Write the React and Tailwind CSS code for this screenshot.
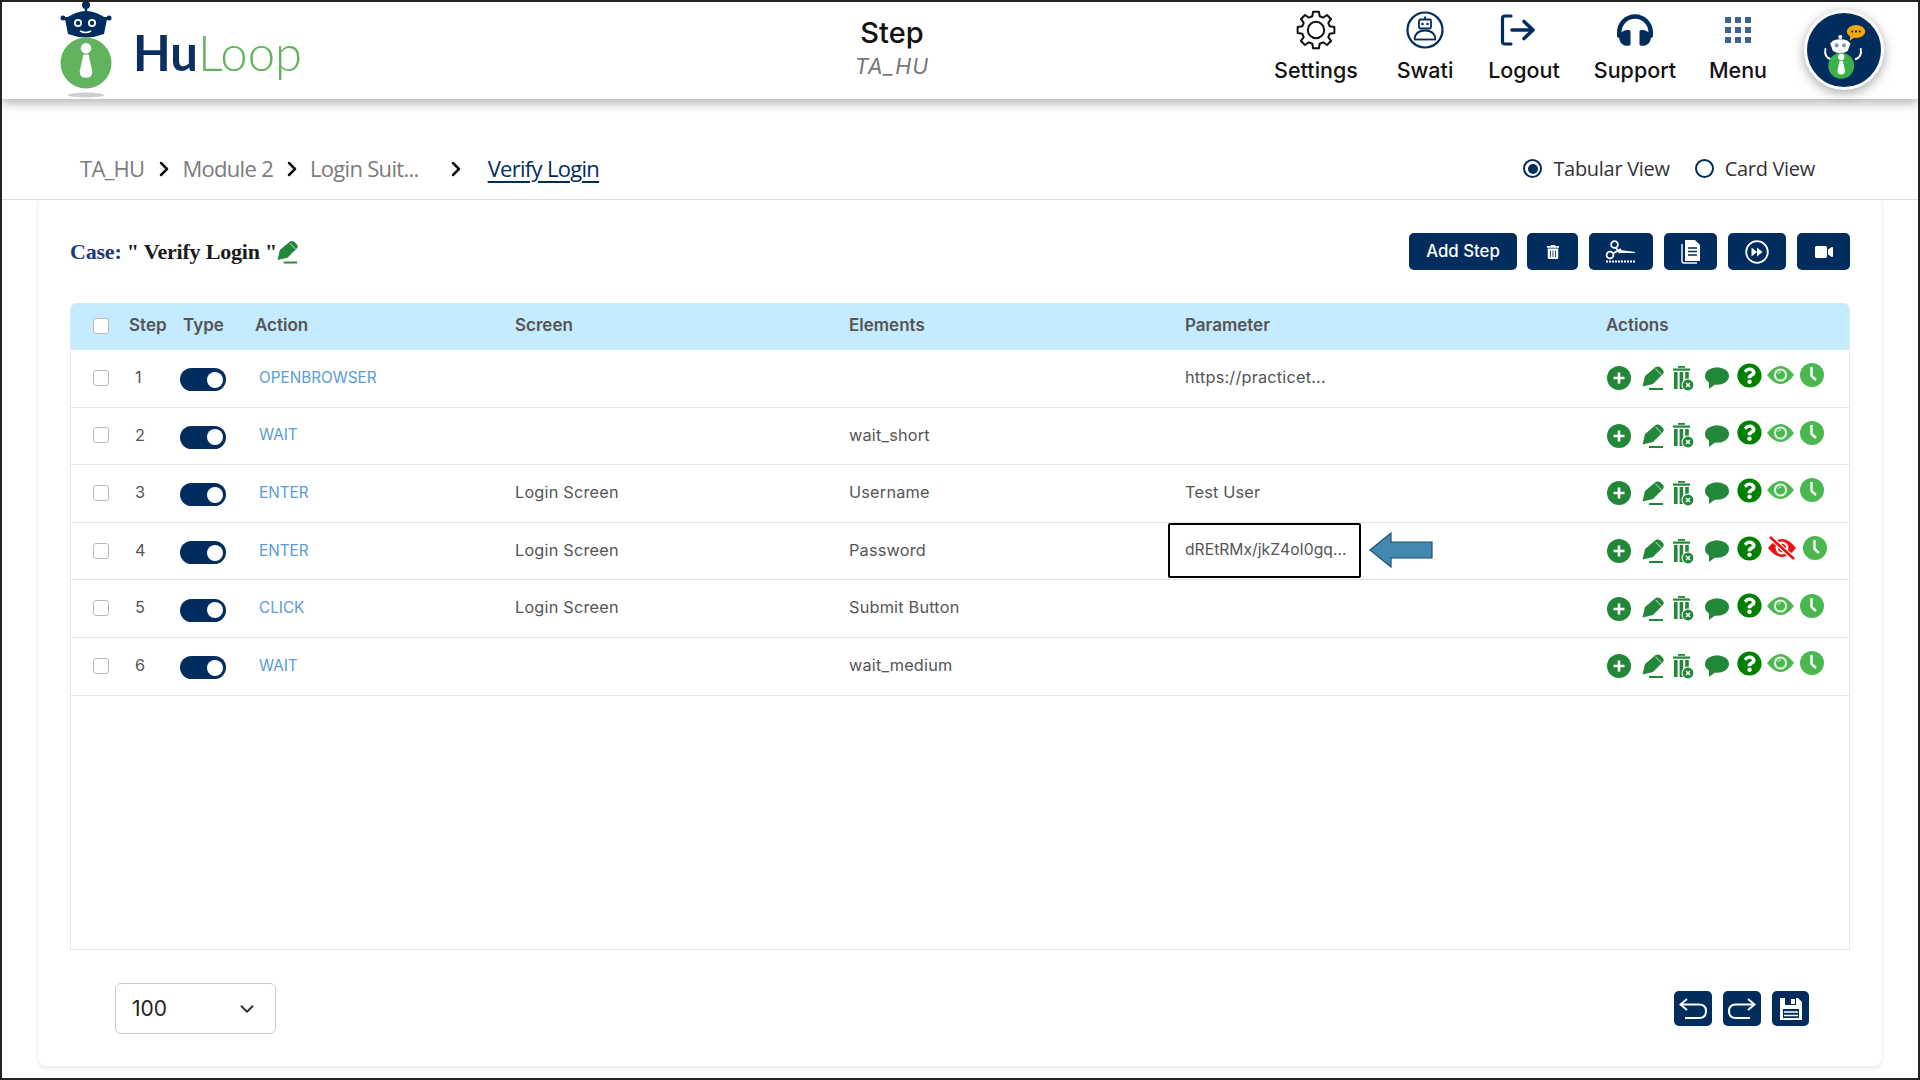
import React from "react";
import { ChevronRight, ChevronDown } from "lucide-react";
import { FaHeadphones, FaQuestionCircle, FaTrashAlt, FaVideo } from "react-icons/fa";

const G = "#23873a";
const L = "#4ab84f";
const NAVY = "#012d5e";

function RobotHead({ cx, cy, s = 1, fill = NAVY, eye = "#fff" }) {
  return (
    <g transform={`translate(${cx} ${cy}) scale(${s})`}>
      <circle cx="0" cy="-29" r="4" fill={fill} />
      <rect x="-1.2" y="-27" width="2.4" height="6" fill={fill} />
      <path d="M-18 0 L-21 -15 Q-10 -23 0 -23 Q10 -23 21 -15 L18 0 Q0 7 -18 0Z" fill={fill} />
      <circle cx="-23" cy="-16" r="2.5" fill={fill} />
      <circle cx="23" cy="-16" r="2.5" fill={fill} />
      <rect x="-23" y="-17" width="8" height="2" fill={fill} />
      <rect x="15" y="-17" width="8" height="2" fill={fill} />
      <circle cx="-8" cy="-11" r="4" fill={eye} />
      <circle cx="6" cy="-11" r="4" fill={eye} />
      <circle cx="-8" cy="-11" r="2.2" fill={fill} />
      <circle cx="6" cy="-11" r="2.2" fill={fill} />
      <path d="M-6 -3 Q0 0 5 -3" stroke={eye} strokeWidth="1.6" fill="none" />
    </g>
  );
}

function Tie({ cx, cy, s = 1, fill = "#fff" }) {
  return (
    <g transform={`translate(${cx} ${cy}) scale(${s})`}>
      <circle cx="0" cy="-14" r="5" fill={fill} />
      <path d="M-2.5 -8 L2.5 -8 L6 8 Q6 14 0 14 Q-6 14 -6 8Z" fill={fill} />
    </g>
  );
}

function LogoMark() {
  return (
    <svg width="52" height="98" viewBox="0 0 52 98" className="shrink-0">
      <RobotHead cx={26} cy={32} />
      <ellipse cx="26" cy="61" rx="25.5" ry="25.5" fill="#62b35d" />
      <Tie cx={26} cy={61} s={1.05} />
      <ellipse cx="26" cy="93" rx="18" ry="2.5" fill="#cfcfcf" />
    </svg>
  );
}

function gearPath() {
  const pts = [];
  for (let i = 0; i < 8; i++) {
    const a = i * 45;
    [[14.2, -15], [18.6, -9], [18.6, 9], [14.2, 15]].forEach(([r, d]) => {
      const t = ((a + d) * Math.PI) / 180;
      pts.push(`${(20 + r * Math.sin(t)).toFixed(2)} ${(20 - r * Math.cos(t)).toFixed(2)}`);
    });
  }
  return `M${pts.join(" L")}Z`;
}

function GearIcon() {
  return (
    <svg width="40" height="40" viewBox="0 0 40 40" fill="none" stroke="#111" strokeWidth="2" strokeLinejoin="round">
      <path d={gearPath()} />
      <circle cx="20" cy="20" r="8.2" />
    </svg>
  );
}

function SwatiIcon() {
  return (
    <svg width="38" height="38" viewBox="0 0 38 38" fill="none" stroke={NAVY}>
      <circle cx="19" cy="19" r="17.5" strokeWidth="2.2" />
      <rect x="13" y="8.5" width="12" height="9" rx="1.5" strokeWidth="1.8" />
      <circle cx="16.5" cy="13" r="1.3" fill={NAVY} stroke="none" />
      <circle cx="21.5" cy="13" r="1.3" fill={NAVY} stroke="none" />
      <path d="M19 8.5 V5.5" strokeWidth="1.8" />
      <path d="M8.5 28 Q9.5 19.5 19 19.5 Q28.5 19.5 29.5 28" strokeWidth="1.8" />
      <path d="M8 28.5 H30" strokeWidth="1.8" />
    </svg>
  );
}

function LogoutIcon() {
  return (
    <svg width="38" height="38" viewBox="0 0 38 38" fill="none" stroke={NAVY} strokeLinecap="round" strokeLinejoin="round" className="ml-[-12px]">
      <path d="M12 5 H6 Q3.5 5 3.5 7.5 V30.5 Q3.5 33 6 33 H12" strokeWidth="3.2" />
      <path d="M13 19 H33" strokeWidth="3.6" />
      <path d="M25 10.5 L34 19 L25 27.5" strokeWidth="3.6" />
    </svg>
  );
}

function GridIcon() {
  const cells = [0, 1, 2, 3, 4, 5, 6, 7, 8];
  return (
    <div className="grid grid-cols-3 gap-[4px] w-[26px]">
      {cells.map((c) => (
        <div key={c} className="w-[6px] h-[6px] bg-[#3b6493]" />
      ))}
    </div>
  );
}

function NavItem({ icon, label, w }) {
  return (
    <div className={`flex flex-col items-center ${w}`}>
      <div className="h-[36px] flex items-center justify-center">{icon}</div>
      <div className="mt-[7px] text-[21.5px] leading-[30px] font-medium text-[#111]">{label}</div>
    </div>
  );
}

function Avatar() {
  return (
    <div className="ml-[30px] mt-[-2px] w-[80px] h-[80px] rounded-full border-[3px] border-white bg-[#012d5e] shadow-[0_3px_12px_rgba(0,0,0,0.35)] shrink-0 overflow-hidden">
      <svg width="74" height="74" viewBox="0 0 80 80">
        <g transform="translate(0 2)">
          <path d="M20 36 Q18 46 26 48" stroke="#fff" strokeWidth="2" fill="none" />
          <path d="M58 36 Q60 46 52 48" stroke="#fff" strokeWidth="2" fill="none" />
          <circle cx="36" cy="24" r="2.2" fill="#fff" />
          <path d="M25 31 L28 28 Q36 25 44 28 L47 31 L44 39 Q36 44 28 39Z" fill="#fff" />
          <circle cx="32" cy="33" r="2.2" fill="#7f9bb8" />
          <circle cx="40" cy="33" r="2.2" fill="#7f9bb8" />
          <circle cx="37" cy="55" r="14" fill="#3cb14a" />
          <Tie cx={37} cy={55} s={0.68} />
          <ellipse cx="53" cy="18" rx="10" ry="7" fill="#f0a80f" />
          <path d="M47 22 L46 28 L52 24Z" fill="#f0a80f" />
          <circle cx="49" cy="18" r="1.2" fill={NAVY} />
          <circle cx="53" cy="18" r="1.2" fill={NAVY} />
          <circle cx="57" cy="18" r="1.2" fill={NAVY} />
        </g>
      </svg>
    </div>
  );
}

function Pencil({ w = 22, h = 24, color = G }) {
  return (
    <svg width={w} height={h} viewBox="0 0 22 24">
      <path d="M0.5 20.5 L3 10 L13 1.5 Q15.5 -0.5 18.5 1.5 L20.5 3.5 Q23 6 20.5 8.5 L11 18Z" fill={color} />
      <path d="M13.5 2.8 L19.4 9" stroke="#fff" strokeWidth="0.8" />
      <rect x="7" y="22" width="14" height="2" fill={color} />
    </svg>
  );
}

function TrashX() {
  return (
    <svg width="21" height="25" viewBox="0 0 21 25" className="shrink-0">
      <rect x="5" y="0" width="7" height="1.8" fill={G} />
      <rect x="0" y="2.5" width="17" height="2.2" fill={G} />
      <rect x="1" y="6" width="3.6" height="17" fill={G} />
      <rect x="6.6" y="6" width="3.6" height="17" fill={G} />
      <rect x="12.2" y="6" width="3.6" height="17" fill={G} />
      <circle cx="15" cy="19" r="6.5" fill="#fff" />
      <circle cx="15" cy="19" r="5.4" fill={G} />
      <path d="M13 17 L17 21 M17 17 L13 21" stroke="#fff" strokeWidth="1.5" />
    </svg>
  );
}

function Bubble() {
  return (
    <svg width="24" height="24" viewBox="0 0 24 24" className="shrink-0">
      <ellipse cx="12" cy="10" rx="12" ry="8.8" fill={G} />
      <path d="M4 14 L4 23 L12 17Z" fill={G} />
    </svg>
  );
}

function Eye() {
  return (
    <svg width="27" height="18" viewBox="0 0 27 18" className="shrink-0 mb-[6px]">
      <path d="M0 9 Q13.5 -9 27 9 Q13.5 27 0 9Z" fill={L} />
      <circle cx="13.5" cy="9" r="6.6" fill="#e4f5e4" />
      <circle cx="13.5" cy="9" r="4.6" fill={L} />
      <path d="M10.5 8 Q11.5 6 14 5.8" stroke="#e4f5e4" strokeWidth="1" fill="none" />
    </svg>
  );
}

function EyeOff() {
  return (
    <svg width="30" height="24" viewBox="0 0 30 24" className="shrink-0 mb-[6px]">
      <path d="M1 12 Q15 -6 29 12 Q15 30 1 12Z" fill="#f01010" />
      <circle cx="15" cy="12" r="6.4" fill="#fff" />
      <circle cx="15" cy="12" r="4.2" fill="#f01010" />
      <path d="M3 1 L27 23" stroke="#fff" strokeWidth="5" />
      <path d="M3 1 L27 23" stroke="#f01010" strokeWidth="2.6" />
    </svg>
  );
}

function Clock() {
  return (
    <svg width="24" height="24" viewBox="0 0 24 24" className="shrink-0 mb-[6px]">
      <circle cx="12" cy="12" r="12" fill={L} />
      <path d="M11.5 4 V13 L16 17" stroke="#fff" strokeWidth="2.4" fill="none" />
    </svg>
  );
}

function PlusCircle() {
  return (
    <svg width="24" height="24" viewBox="0 0 24 24" className="shrink-0">
      <circle cx="12" cy="12" r="12" fill={G} />
      <path d="M12 6.5 V17.5 M6.5 12 H17.5" stroke="#fff" strokeWidth="2.6" />
    </svg>
  );
}

function ActionIcons({ off }) {
  return (
    <div className="flex items-center h-full ml-[1px]">
      <PlusCircle />
      <div className="ml-[11px] shrink-0 flex"><Pencil /></div>
      <div className="ml-[9px] shrink-0 flex"><TrashX /></div>
      <div className="ml-[11px] shrink-0 flex"><Bubble /></div>
      <div className="ml-[8px] shrink-0 flex mb-[6px]"><FaQuestionCircle size={25} color="#008000" /></div>
      <div className="ml-[5px] shrink-0 flex">{off ? <EyeOff /> : <Eye />}</div>
      <div className="ml-[6px] shrink-0 flex"><Clock /></div>
    </div>
  );
}

function Check() {
  return <div className="ml-[22px] mb-[1px] w-[16px] h-[16px] rounded-[3px] border border-[#bbb] bg-white" />;
}

function Toggle() {
  return (
    <div className="ml-[-3px] mt-[3px] w-[46px] h-[23px] rounded-full bg-[#012d5e] flex items-center justify-end pr-[3px]">
      <div className="w-[16px] h-[16px] rounded-full bg-white" />
    </div>
  );
}

const cols = "grid grid-cols-[58px_54px_72px_260px_334px_336px_421px_1fr] items-center";

const rows = [
  { n: 1, a: "OPENBROWSER", s: "", e: "", p: "https://practicet..." },
  { n: 2, a: "WAIT", s: "", e: "wait_short", p: "" },
  { n: 3, a: "ENTER", s: "Login Screen", e: "Username", p: "Test User" },
  { n: 4, a: "ENTER", s: "Login Screen", e: "Password", p: "dREtRMx/jkZ4oI0gq...", mark: true },
  { n: 5, a: "CLICK", s: "Login Screen", e: "Submit Button", p: "" },
  { n: 6, a: "WAIT", s: "", e: "wait_medium", p: "" },
];

function ToolBtn({ w, children }) {
  return (
    <button className={`${w} h-[37px] rounded-[5px] bg-[#012d5e] text-white flex items-center justify-center text-[16.8px] font-medium shrink-0`}>
      {children}
    </button>
  );
}

function FootBtn({ w, children }) {
  return <button className={`${w} h-[35px] rounded-[5px] bg-[#012d5e] flex items-center justify-center shrink-0`}>{children}</button>;
}

function Radio({ on, label }) {
  return (
    <div className="flex items-center gap-[11px]">
      <div className="w-[19px] h-[19px] rounded-full border-2 border-[#012d5e] flex items-center justify-center">
        {on && <div className="w-[10px] h-[10px] rounded-full bg-[#012d5e]" />}
      </div>
      <span className="text-[20px] tracking-[-0.3px] text-[#333]">{label}</span>
    </div>
  );
}

export default function App() {
  return (
    <div className="w-[1920px] h-[1080px] border-2 border-[#222] bg-white overflow-hidden flex flex-col [font-family:Inter,sans-serif] text-[#555]">
      <header className="relative z-10 h-[97px] shrink-0 bg-white shadow-[0_4px_10px_rgba(0,0,0,0.3)] flex items-start">
        <div className="w-[600px] pl-[58px] flex items-start">
          <LogoMark />
          <div className="ml-[21px] mt-[21px] text-[49px] leading-[58px] [font-family:Lato,sans-serif]">
            <span className="font-bold text-[#0b2f5f]">Hu</span>
            <span className="font-light text-[#62b35d]">Loop</span>
          </div>
        </div>
        <div className="w-[580px] flex flex-col items-center pt-[13px]">
          <div className="text-[29px] leading-[36px] font-medium text-[#111]">Step</div>
          <div className="text-[21.5px] leading-[30px] italic tracking-[1px] text-[#777]">TA_HU</div>
        </div>
        <div className="flex items-start pt-[10px] ml-[80px]">
          <NavItem w="w-[108px]" label="Settings" icon={<GearIcon />} />
          <NavItem w="w-[110px]" label="Swati" icon={<SwatiIcon />} />
          <NavItem w="w-[88px]" label="Logout" icon={<LogoutIcon />} />
          <NavItem w="w-[134px]" label="Support" icon={<FaHeadphones size={36} color={NAVY} />} />
          <NavItem w="w-[72px]" label="Menu" icon={<GridIcon />} />
          <Avatar />
        </div>
      </header>

      <div className="h-[101px] shrink-0 border-b border-[#ddd] pt-[39px] pl-[78px] pr-[103px] flex items-center justify-between [font-family:Open_Sans,sans-serif]">
        <div className="flex items-center text-[22px] tracking-[-0.7px] text-[#7b7b7b]">
          <span>TA_HU</span>
          <ChevronRight size={24} strokeWidth={2.5} color="#111" className="ml-[8px] mr-[6px]" />
          <span>Module 2</span>
          <ChevronRight size={24} strokeWidth={2.5} color="#111" className="ml-[7px] mr-[6px]" />
          <span>Login Suit...</span>
          <ChevronRight size={24} strokeWidth={2.5} color="#111" className="ml-[25px] mr-[20px]" />
          <span className="text-[#012d5e] underline underline-offset-[4px]">Verify Login</span>
        </div>
        <div className="flex items-center gap-[25px]">
          <Radio on label="Tabular View" />
          <Radio label="Card View" />
        </div>
      </div>

      <main className="mx-[36px] w-[1844px] h-[866px] bg-white rounded-b-lg border-x border-[#f6f6f6] shadow-[0_3px_4px_rgba(0,0,0,0.08)] px-[31px] flex flex-col">
        <div className="h-[103px] shrink-0 flex items-center justify-between">
          <div className="flex items-center [font-family:Liberation_Serif,serif] font-bold text-[22px] tracking-[-0.2px] text-[#1a1a1a]">
            <span className="text-[#1f3a7a]">Case:&nbsp;</span>
            <span>" Verify Login "</span>
            <Pencil w={21} h={24} />
          </div>
          <div className="flex items-center gap-[11px]">
            <div className="mr-[-1px]"><ToolBtn w="w-[108px]">Add Step</ToolBtn></div>
            <ToolBtn w="w-[51px]"><FaTrashAlt size={14} /></ToolBtn>
            <ToolBtn w="w-[64px]">
              <svg width="32" height="24" viewBox="0 0 32 24" fill="none" stroke="#fff">
                <circle cx="9.5" cy="4.5" r="3.4" strokeWidth="1.8" />
                <circle cx="5" cy="15" r="3.4" strokeWidth="1.8" />
                <path d="M10.5 7.5 L15 13 M8 13.5 L16 9" strokeWidth="1.8" />
                <path d="M15 10.5 L30 12.5 H16Z" fill="#fff" strokeWidth="1.2" />
                <path d="M1 21.5 H31" strokeWidth="1.8" strokeDasharray="2 1" />
              </svg>
            </ToolBtn>
            <ToolBtn w="w-[53px]">
              <svg width="20" height="25" viewBox="0 0 20 25">
                <path d="M1 5 V22 Q1 24 3 24 H16" stroke="#fff" strokeWidth="1.4" fill="none" />
                <path d="M4 1 H14 L19 6 V22 H4Z" fill="#fff" />
                <path d="M7 9 H16 M7 12.5 H16 M7 16 H16" stroke={NAVY} strokeWidth="1.4" />
              </svg>
            </ToolBtn>
            <ToolBtn w="w-[58px]">
              <svg width="24" height="24" viewBox="0 0 24 24" fill="none">
                <circle cx="12" cy="12" r="10.8" stroke="#fff" strokeWidth="1.8" />
                <path d="M6.5 7.5 L12 12 L6.5 16.5Z M12 7.5 L17.5 12 L12 16.5Z" fill="#fff" />
              </svg>
            </ToolBtn>
            <ToolBtn w="w-[53px]"><FaVideo size={18} /></ToolBtn>
          </div>
        </div>

        <div className="h-[647px] shrink-0 border border-[#e5e7eb] border-t-0 rounded-t-md">
          <div className={`${cols} h-[47px] bg-[#c4ebff] rounded-t-md text-[17px] font-semibold text-[#555]`}>
            <Check />
            <div className="pb-[2px]">Step</div>
            <div className="pb-[2px]">Type</div>
            <div className="pb-[2px]">Action</div>
            <div className="pb-[2px]">Screen</div>
            <div className="pb-[2px]">Elements</div>
            <div className="pb-[2px]">Parameter</div>
            <div className="pb-[2px]">Actions</div>
          </div>
          {rows.map((r) => (
            <div key={r.n} className={`${cols} h-[57.6px] border-b border-[#e2e2e2] text-[16.3px] tracking-[0.2px] text-[#555]`}>
              <Check />
              <div className="pl-[6px] pb-[2px]">{r.n}</div>
              <Toggle />
              <div className="pl-[4px] text-[15.3px] tracking-normal text-[#5a9bd8]">{r.a}</div>
              <div className="pb-[2px]">{r.s}</div>
              <div className="pb-[2px]">{r.e}</div>
              <div className={`relative pb-[2px] ${r.mark ? "text-[15.7px] tracking-normal" : ""}`}>
                {r.p}
                {r.mark && (
                  <>
                    <div className="absolute left-[-17px] top-[-15px] w-[193px] h-[55px] border-2 border-black rounded-[2px]" />
                    <svg className="absolute left-[184px] top-[-6px]" width="64" height="36" viewBox="0 0 64 36">
                      <path d="M1 18 L22 1 V10 H63 V26 H22 V35Z" fill="#4289b0" stroke="#1f4e79" strokeWidth="1.2" />
                    </svg>
                  </>
                )}
              </div>
              <ActionIcons off={r.mark} />
            </div>
          ))}
        </div>

        <div className="flex-1 flex items-start justify-between pl-[45px] pr-[41px]">
          <div className="mt-[33px] w-[161px] h-[51px] border border-[#ccc] rounded-[6px] flex items-center justify-between pl-[16px] pr-[17px] text-[21px] text-[#222]">
            <span>100</span>
            <ChevronDown size={22} color="#333" strokeWidth={2.2} />
          </div>
          <div className="mt-[41px] flex gap-[11px]">
            <FootBtn w="w-[38px]">
              <svg width="28" height="22" viewBox="0 0 28 22" fill="none" stroke="#fff" strokeWidth="2">
                <path d="M8 1 L1.5 6.5 L8 12" />
                <path d="M2 6.5 H20 Q27 6.5 27 13 Q27 20 20 20 H6" />
              </svg>
            </FootBtn>
            <FootBtn w="w-[38px]">
              <svg width="28" height="22" viewBox="0 0 28 22" fill="none" stroke="#fff" strokeWidth="2">
                <path d="M20 1 L26.5 6.5 L20 12" />
                <path d="M26 6.5 H8 Q1 6.5 1 13 Q1 20 8 20 H22" />
              </svg>
            </FootBtn>
            <FootBtn w="w-[37px]">
              <svg width="24" height="24" viewBox="0 0 24 24">
                <path d="M1 1 H19 L23 5 V23 H1Z" fill="#fff" />
                <rect x="6" y="1" width="11" height="7" fill={NAVY} />
                <rect x="12" y="2" width="4" height="5" fill="#fff" />
                <rect x="4" y="12" width="16" height="9" fill={NAVY} />
                <path d="M5 15 H19 M5 18.5 H19" stroke="#fff" strokeWidth="1.4" />
              </svg>
            </FootBtn>
          </div>
        </div>
      </main>
    </div>
  );
}
